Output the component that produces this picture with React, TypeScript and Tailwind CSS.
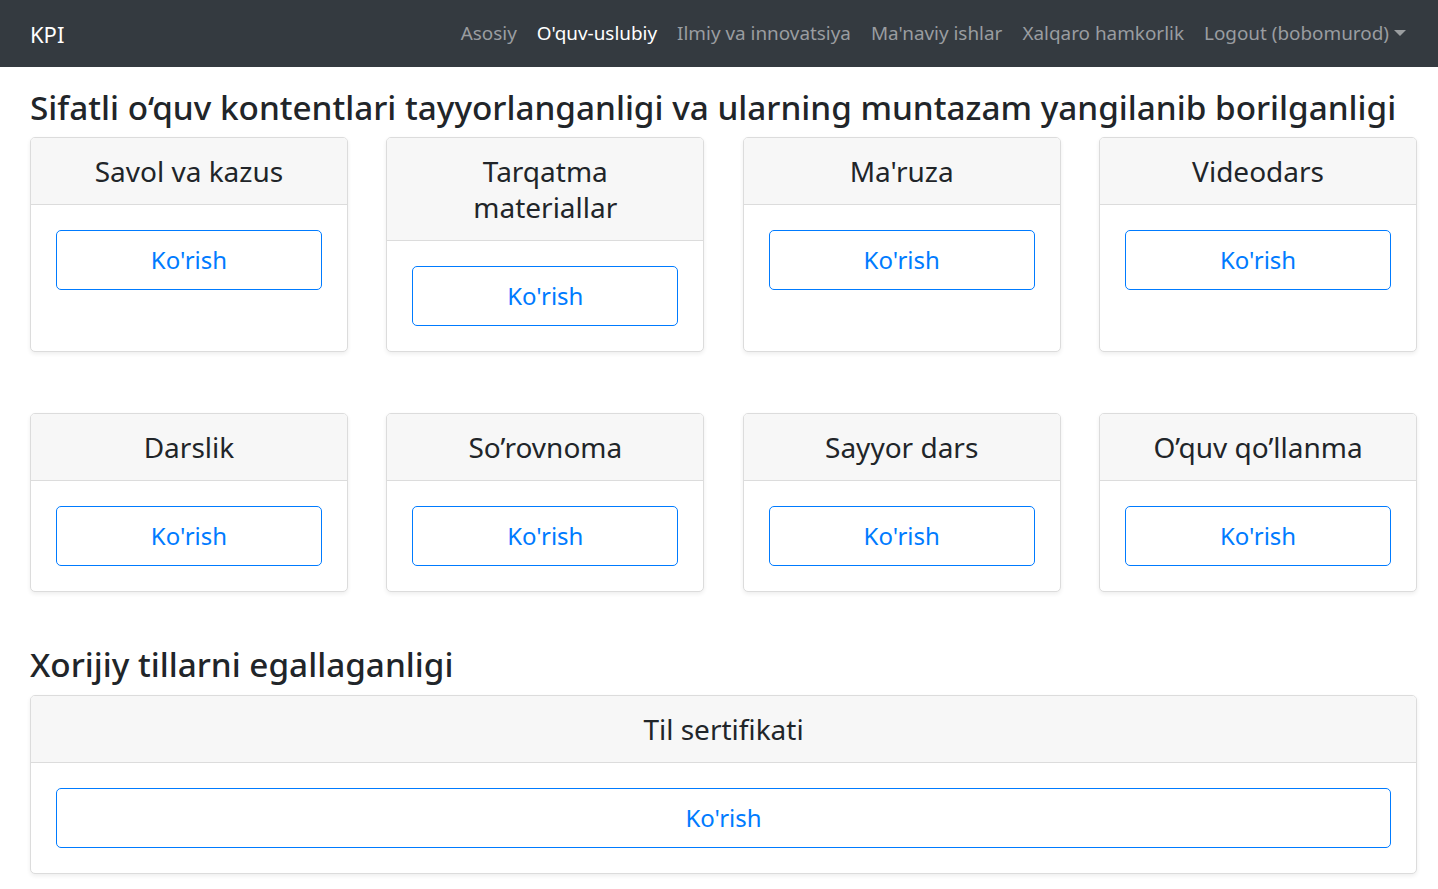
import React from "react";

const row1 = ["Savol va kazus", "Tarqatma materiallar", "Ma'ruza", "Videodars"];
const row2 = ["Darslik", "So’rovnoma", "Sayyor dars", "O’quv qo’llanma"];

function Card({ title }: { title: string }) {
  return (
    <div className="flex flex-col overflow-hidden rounded-[5px] border border-[#dcdcdc] bg-white shadow-[0_2px_4px_rgba(0,0,0,0.07)]">
      <div className="border-b border-[#dcdcdc] bg-[#f7f7f7] px-[24px] py-[15px] text-center text-[28px] leading-[36px] text-[#212529]">
        {title}
      </div>
      <div className="flex-1 p-[25px]">
        <button className="flex h-[60px] w-full items-center justify-center rounded-[5px] border border-[#007bff] bg-white text-[24px] text-[#007bff]">
          Ko'rish
        </button>
      </div>
    </div>
  );
}

const links = ["Asosiy", "O'quv-uslubiy", "Ilmiy va innovatsiya", "Ma'naviy ishlar", "Xalqaro hamkorlik"];

export default function App() {
  return (
    <div className="min-h-screen bg-white" style={{ fontFamily: '"Noto Sans", "Open Sans", sans-serif' }}>
      <nav className="flex h-[67px] items-center justify-between bg-[#343a40] pl-[30px] pr-[22px]">
        <span className="text-[22px] leading-none text-white">KPI</span>
        <div className="flex items-center text-[18.9px]">
          {links.map((l) => (
            <span key={l} className={`px-[10px] ${l === "O'quv-uslubiy" ? "text-white" : "text-[#9a9da0]"}`}>
              {l}
            </span>
          ))}
          <span className="flex items-center px-[10px] text-[#9a9da0]">
            Logout (bobomurod)
            <svg width="12" height="6" viewBox="0 0 12 6" className="ml-[5px]">
              <path d="M0 0h12L6 6z" fill="#9a9da0" />
            </svg>
          </span>
        </div>
      </nav>
      <main className="pl-[30px] pr-[21px]">
        <h2 className="mt-[17px] mb-[7px] whitespace-nowrap text-[33.3px] font-medium leading-[46px] text-[#212529]">
          Sifatli o‘quv kontentlari tayyorlanganligi va ularning muntazam yangilanib borilganligi
        </h2>
        <div className="grid grid-cols-4 gap-x-[38.5px] gap-y-[61px]">
          {row1.map((t) => (
            <Card key={t} title={t} />
          ))}
          {row2.map((t) => (
            <Card key={t} title={t} />
          ))}
        </div>
        <h2 className="mt-[49px] mb-[8px] text-[33.3px] font-medium leading-[46px] text-[#212529]">
          Xorijiy tillarni egallaganligi
        </h2>
        <Card title="Til sertifikati" />
      </main>
    </div>
  );
}
